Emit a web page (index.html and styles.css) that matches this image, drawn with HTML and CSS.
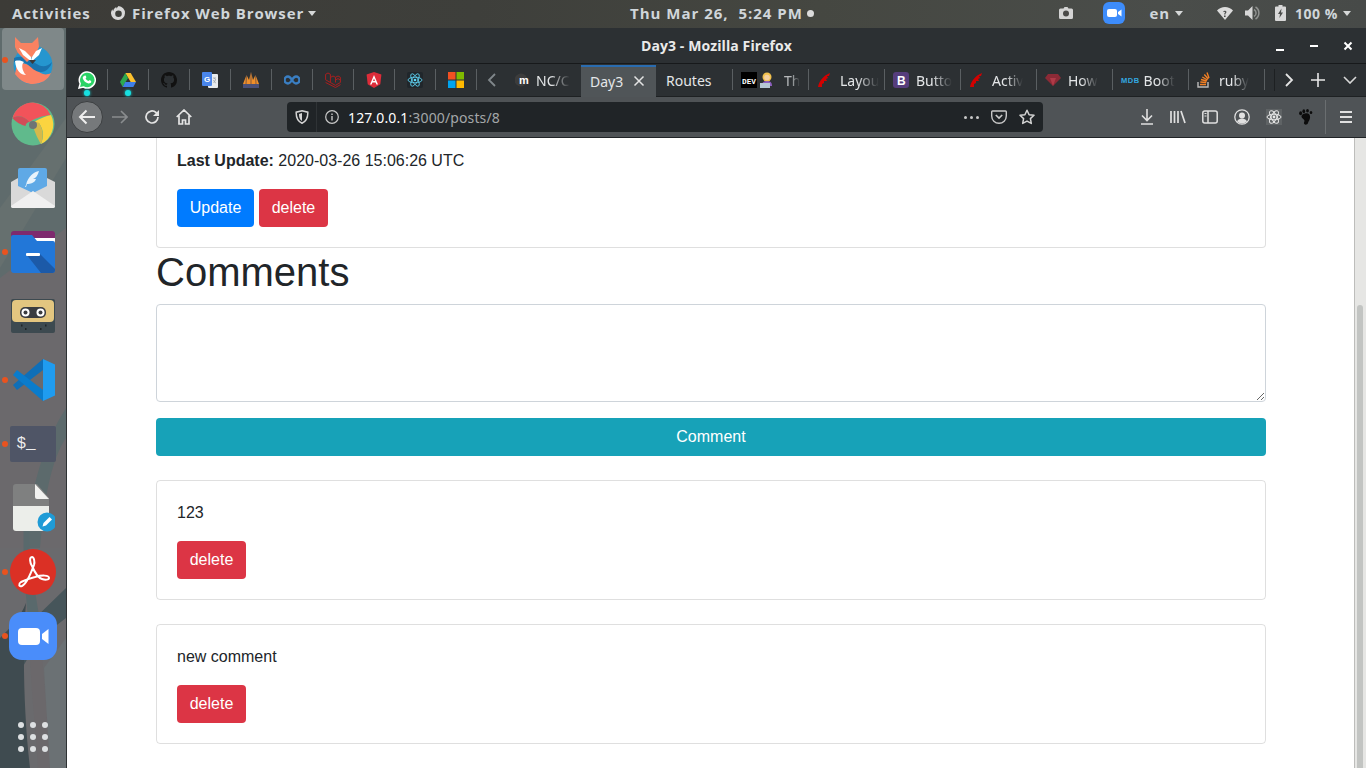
FILE: index.html
```html
<!DOCTYPE html>
<html lang="en">
<head>
<meta charset="utf-8">
<title>Day3 - Mozilla Firefox</title>
<link rel="stylesheet" href="styles.css">
</head>
<body>
<header class="topbar">
  <span class="tb-activities">Activities</span>
  <span class="tb-app"><svg class="tb-fx" width="16" height="16" viewBox="0 0 16 16"><path d="M8.500 1a7 7 0 1 1-7.500 7.500c0-1.700.5-3.200 1.400-4.300.1.900.4 1.500.9 1.900C3.400 4.300 4.600 2.800 6.400 2c-.2.600-.1 1.100.2 1.500C7 2.800 7.800 1.800 8.500 1z" fill="#d8d8d8"/><circle cx="8.500" cy="8.700" r="3.300" fill="#3e3f3b"/></svg><span>Firefox Web Browser</span><i class="caret"></i></span>
  <span class="tb-clock">Thu Mar 26,&nbsp; 5:24 PM<i class="tb-dot"></i></span>
  <span class="tb-tray">
    <svg class="tr-cam" width="14" height="12" viewBox="0 0 14 12"><path d="M1.500 1.500h3L5.500 0h3l1 1.500h3A1.500 1.500 0 0 1 14 3v7.500a1.500 1.500 0 0 1-1.500 1.500h-11A1.500 1.500 0 0 1 0 10.500V3a1.500 1.500 0 0 1 1.500-1.500z" fill="#d4d4d4"/><circle cx="7" cy="6.500" r="3" fill="#4a4a48"/></svg>
    <svg class="tr-zoom" width="22" height="22" viewBox="0 0 22 22"><rect width="22" height="22" rx="6" fill="#3d8cfb"/><rect x="4" y="7" width="10" height="8" rx="2" fill="#fff"/><path d="M15 10l3.500-2.500v7L15 12z" fill="#fff"/></svg>
    <span class="tr-lang">en</span><i class="caret tr-c1"></i>
    <svg class="tr-wifi" width="16" height="13" viewBox="0 0 16 13"><path d="M8 13L0 3.500C2 1.500 5 0 8 0s6 1.500 8 3.500z" fill="#dcdcdc"/><path d="M7 8.500h1.600V10H7zM6.200 4.500c.4-.8 2.800-1 3.200.3.300 1-1 1.200-1 2.800H7.200c0-1.500 1.100-1.800 1-2.500-.1-.5-.9-.4-1.200.2z" fill="#4a4c4a"/></svg>
    <svg class="tr-vol" width="15" height="14" viewBox="0 0 15 14"><path d="M0 4.500h3L7.500 0v14L3 9.500H0z" fill="#d8d8d8"/><path d="M9 3.500a4 4 0 0 1 0 7M10.500 1a7 7 0 0 1 0 12" stroke="#8f918f" stroke-width="1.500" fill="none"/></svg>
    <svg class="tr-bat" width="11" height="16" viewBox="0 0 11 16"><path d="M3.500 0h4v1.500H10a1 1 0 0 1 1 1V15a1 1 0 0 1-1 1H1a1 1 0 0 1-1-1V2.500a1 1 0 0 1 1-1h2.500z" fill="#d8d8d8"/><path d="M6.500 3.500L3 9h2l-.6 4L8 7.500H6z" fill="#4a4c4a"/></svg>
    <span class="tr-pct">100 %</span><i class="caret tr-c2"></i>
  </span>
</header>

<div class="desk">
  <nav class="dock">
    <svg class="dock-wall" width="66" height="740" viewBox="0 0 66 740" preserveAspectRatio="none">
      <rect width="66" height="740" fill="#5f6b6c"/>
      <path d="M0 250L66 200V520L0 560z" fill="#6b696c"/>
      <path d="M0 180L66 90V130L0 240z" fill="#66706f"/>
      <path d="M66 380C40 420 30 470 24 520L40 520C44 470 52 430 66 410z" fill="#5c6a6c"/>
      <path d="M0 520H66V740H0z" fill="#6a6a6d"/>
      <path d="M30 490C26 530 38 570 42 610L30 610C26 570 22 530 24 490z" fill="#59696c"/>
      <path d="M66 560L30 595 22 640 40 610 66 590z" fill="#46555a"/>
      <path d="M0 610C10 600 20 590 26 575 22 620 24 690 30 740H0z" fill="#3f4b50"/>
      <path d="M30 590C28 640 36 700 38 740H50C48 690 42 640 40 590z" fill="#6b686b"/>
      <path d="M44 640L66 610V740H50z" fill="#6b7174"/>
    </svg>
    <div class="dock-item active"><i class="run"></i>
      <svg width="48" height="48" viewBox="0 0 48 48"><circle cx="24" cy="29" r="19.500" fill="#2596cf"/><path d="M6 38c6 8 12 10 18 10 8 0 15-4 18-11-6 3-10 1-16-4-5-4-12-7-18-5z" fill="#fb8264"/><path d="M5 22c8-3 14 0 21 5 6 4 11 5 17-1-1 5-6 10-11 10-6 0-10-5-14-8-4-2-8-3-13-2z" fill="#1a73ae"/><path d="M6 25c4-1 7 0 9 1-3 2-2 9 2 13-5 0-10-4-11-14z" fill="#fff"/><path d="M7 0l6 6h11l6-6 1 10-3 6-9 9-9-9-3-6z" fill="#f98261" transform="translate(-1 1)"/><path d="M10 12l6 3 6 6 1 5-9-7z" fill="#fff"/><path d="M33 12l-6 3-4 6-1 5 8-7z" fill="#fff"/><path d="M20 24h7l-3.500 4z" fill="#3d3a3a"/></svg>
    </div>
    <div class="dock-item">
      <svg width="44" height="44" viewBox="0 0 44 44"><circle cx="22" cy="22" r="21.500" fill="#60ba8c"/><path d="M22 .5A21.500 21.500 0 0 0 1.500 16c5-3 12-2 17 4 4-3 12-6 21-7A21.500 21.500 0 0 0 22 .5z" fill="#f2535a"/><path d="M1.500 16c3 4 9 7 13 8 0-2 2-4 4-4-5-6-12-7-17-4z" fill="#d24c58"/><path d="M28 21c-3 0-3.500 0-5-1 5-3 12-6 17-7a21.500 21.500 0 0 1-10 29c3-7 3-14-2-21z" fill="#fbd440"/><path d="M23 20c3 0 4 0 5 1 4 6 5 13 2 21-2-3-6-11-7-15 0-2 1-5 0-7z" fill="#d6b94a"/><circle cx="22" cy="23" r="4" fill="#6f7474"/></svg>
    </div>
    <div class="dock-item">
      <svg width="44" height="40" viewBox="0 0 44 40"><rect x="7" y="0" width="29" height="24" rx="2" fill="#5fa9e6"/><path d="M28 3c-5 1-11 5-13 14l-1 2 1 0 1-3c3 0 8-1 9-5 0 0-2 0-3 0 3-1 5-4 6-8z" fill="#e8f3fb"/><path d="M0 14l7-4v8l15 7 14-7v-8l8 4v24a2 2 0 0 1-2 2H2a2 2 0 0 1-2-2z" fill="#d9d9d9"/><path d="M0 38l22-15 22 15a2 2 0 0 1-2 2H2a2 2 0 0 1-2-2z" fill="#f0f0f0"/></svg>
    </div>
    <div class="dock-item"><i class="run"></i>
      <svg width="44" height="42" viewBox="0 0 44 42"><path d="M0 3a3 3 0 0 1 3-3h38a3 3 0 0 1 3 3v10H0z" fill="#7e2a6e"/><rect x="22" y="7" width="22" height="6" fill="#fff"/><path d="M0 6a2 2 0 0 1 2-2h19l5 6h16a2 2 0 0 1 2 2v27a3 3 0 0 1-3 3H3a3 3 0 0 1-3-3z" fill="#2277d8"/><path d="M15 23h14l15 15v1a3 3 0 0 1-3 3H30z" fill="#1c5aa8"/><rect x="15" y="22" width="14" height="3" rx="1" fill="#fff"/></svg>
    </div>
    <div class="dock-item">
      <svg width="44" height="34" viewBox="0 0 44 34"><path d="M0 2a2 2 0 0 1 2-2h40a2 2 0 0 1 2 2v30a2 2 0 0 1-2 2H2a2 2 0 0 1-2-2z" fill="#3d4a50"/><rect x="1" y="1" width="42" height="22" rx="4" fill="#e3c680"/><rect x="9" y="8" width="26" height="11" rx="5" fill="#3a3c40"/><circle cx="14.500" cy="13.500" r="4" fill="#fff"/><circle cx="14.500" cy="13.500" r="2" fill="#3a3c40"/><circle cx="29.500" cy="13.500" r="4" fill="#fff"/><circle cx="29.500" cy="13.500" r="2" fill="#3a3c40"/><path d="M10 26.500h1.500M14 30h1.500M29 30h1.500M34 26.500h1.500" stroke="#1f2528" stroke-width="2"/></svg>
    </div>
    <div class="dock-item"><i class="run"></i>
      <svg width="44" height="42" viewBox="0 0 44 42"><path d="M32 0L2 26l4 5L32 11z" fill="#0f6fb8"/><path d="M32 42L2 16l4-5 26 20z" fill="#0a7ccc"/><path d="M32 0l12 5.500v31L32 42z" fill="#1f9cf0"/></svg>
    </div>
    <div class="dock-item"><i class="run"></i>
      <div class="term"><span class="term-text">$_</span></div>
    </div>
    <div class="dock-item">
      <svg width="44" height="48" viewBox="0 0 44 48"><path d="M5 0h21l12 14v8H2V3a3 3 0 0 1 3-3z" fill="#7f8080"/><path d="M2 22h36v22a3 3 0 0 1-3 3H5a3 3 0 0 1-3-3z" fill="#eceeea"/><path d="M24 0l14 15H26a2 2 0 0 1-2-2z" fill="#f2f2f0"/><circle cx="36" cy="38" r="9.500" fill="#1f9bd6"/><path d="M31.500 42.500l1-3.500 6-6 2.500 2.500-6 6z" fill="#fff"/></svg>
    </div>
    <div class="dock-item"><i class="run"></i>
      <svg width="46" height="46" viewBox="0 0 46 46"><circle cx="23" cy="23" r="23" fill="#db3025"/><path d="M11 33c-3 2-2 5 1 4 5-2 9-13 12-21 1-3 0-8-2-8-3 0-2 6 0 9 3 7 7 12 10 13 3 1 7 1 7-1 0-3-7-3-14-1-4 1-10 3-14 5z" fill="none" stroke="#fff" stroke-width="2"/></svg>
    </div>
    <div class="dock-item"><i class="run"></i>
      <svg width="48" height="48" viewBox="0 0 48 48"><rect width="48" height="48" rx="13" fill="#4a8dfa"/><rect x="9" y="16" width="22" height="17" rx="4" fill="#fff"/><path d="M33 22l6.500-5v15L33 27z" fill="#fff"/></svg>
    </div>
    <div class="dock-apps">
      <i></i><i></i><i></i><i></i><i></i><i></i><i></i><i></i><i></i>
    </div>
  </nav>

  <div class="window">
    <div class="titlebar">
      <span class="title">Day3 - Mozilla Firefox</span>
      <span class="wm">
        <svg width="12" height="12" viewBox="0 0 12 12"><rect x="2" y="9" width="8" height="2" fill="#fff"/></svg>
        <svg width="12" height="12" viewBox="0 0 12 12"><rect x="2" y="5" width="8" height="2" fill="#fff"/></svg>
        <svg width="12" height="12" viewBox="0 0 12 12"><path d="M2.500 2.500l7 7m0-7l-7 7" stroke="#fff" stroke-width="2"/></svg>
      </span>
    </div>

    <div class="tabbar">
      <span class="pin"><svg width="18" height="18" viewBox="0 0 18 18"><path d="M1 17l1.200-4.300A8 8 0 1 1 5.400 16z" fill="#2bd366" stroke="#fff" stroke-width="1.500"/><path d="M6 5c1-1 2-.5 2.300 1 .2.800-.8 1.200-.6 1.700.5 1 1.400 1.800 2.500 2.300.6-.2.800-1 1.500-.8 1.200.3 1.800 1 1.500 2-.5 1-2 1.500-3.400 1-2.500-.8-4.200-2.500-5-4.800C4.500 6.400 5 5.700 6 5z" fill="#fff"/></svg><b class="pin-note"></b></span>
      <span class="pin"><svg width="16" height="14" viewBox="0 0 16 14"><path d="M5.300 0h5.400l5.300 9h-5.300z" fill="#fbc02d"/><path d="M5.300 0L0 9l2.700 5 5.300-9z" fill="#2da94f"/><path d="M2.700 14h10.600L16 9H5.300z" fill="#3f7ee8"/></svg><b class="pin-note"></b></span>
      <span class="pin"><svg width="16" height="16" viewBox="0 0 16 16"><path fill="#111" d="M8 0C3.580 0 0 3.580 0 8c0 3.540 2.290 6.530 5.470 7.590.4.070.55-.17.55-.38 0-.19-.01-.82-.01-1.490-2.010.37-2.530-.49-2.690-.94-.09-.23-.48-.94-.82-1.130-.28-.15-.68-.52-.01-.53.63-.01 1.080.58 1.230.82.72 1.210 1.870.87 2.330.66.070-.52.28-.87.51-1.070-1.780-.2-3.640-.89-3.640-3.950 0-.87.310-1.590.820-2.150-.080-.2-.360-1.020.080-2.120 0 0 .670-.21 2.200.820.640-.180 1.320-.270 2-.270s1.360.090 2 .270c1.530-1.040 2.200-.820 2.200-.820.440 1.100.160 1.920.080 2.120.510.560.820 1.270.820 2.150 0 3.070-1.870 3.750-3.650 3.950.290.250.540.730.540 1.480 0 1.070-.010 1.930-.010 2.200 0 .210.150.460.550.380A8.010 8.010 0 0 0 16 8c0-4.420-3.580-8-8-8z"/></svg></span>
      <span class="pin"><svg width="16" height="16" viewBox="0 0 16 16"><rect x="6" y="2" width="10" height="14" rx="1" fill="#e8eaed"/><path d="M11 6h3M12.500 6v1M11.500 11c1-1 2-2.500 2-4M11.500 8c.5 1.500 1.500 2.500 2.500 3" stroke="#9aa0a6" fill="none" stroke-width=".8"/><rect width="10" height="14" rx="1" fill="#4a86ec"/><text class="mini" x="2" y="10">G</text></svg></span>
      <span class="pin"><svg width="16" height="16" viewBox="0 0 16 16"><path d="M0 12L3.500 3 6 8l2-8 2 8 2.500-5 3.500 9z" fill="#ef8e2a"/><path d="M3.500 3L3 12M8 0v12M12.500 3L13 12" stroke="#3a3a4a" stroke-width=".6"/><rect y="12" width="16" height="4" fill="#4a5078"/></svg></span>
      <span class="pin"><svg width="16" height="10" viewBox="0 0 16 10"><path d="M8 5C6.500 2.500 5.500 1.500 4 1.500a3.500 3.500 0 0 0 0 7C5.500 8.500 6.500 7.500 8 5c1.500-2.500 2.500-3.500 4-3.500a3.500 3.500 0 0 1 0 7C10.500 8.500 9.500 7.500 8 5z" fill="none" stroke="#3a7ec2" stroke-width="2.400"/></svg></span>
      <span class="pin"><svg width="16" height="16" viewBox="0 0 16 16"><path d="M.6 2.300L3 1l2.400 1.300v8.200l5 2.900 5-2.900V8L13 6.600 10.500 8v2.500M10.500 8V5.300L13 4l2.400 1.300V8M5.400 5.500L8 4l2.500 1.300M5.400 10.500L.6 7.800V2.300m0 8.200l9.900 5 5-2.900" fill="none" stroke="#a81f1f" stroke-width="1"/></svg></span>
      <span class="pin"><svg width="16" height="16" viewBox="0 0 16 16"><path d="M8 0l7.400 2.600-1.100 9.700L8 16l-6.300-3.700L.6 2.600z" fill="#dd2c39"/><path d="M8 3L4 12.500h1.600l.8-2h3.200l.8 2H12zM7 9l1-2.500L9 9z" fill="#fff"/></svg></span>
      <span class="pin"><svg width="16" height="16" viewBox="0 0 16 16"><rect width="16" height="16" rx="2" fill="#20262b"/><g fill="none" stroke="#61dafb" stroke-width=".8"><ellipse cx="8" cy="8" rx="7" ry="2.800"/><ellipse cx="8" cy="8" rx="7" ry="2.800" transform="rotate(60 8 8)"/><ellipse cx="8" cy="8" rx="7" ry="2.800" transform="rotate(120 8 8)"/></g><circle cx="8" cy="8" r="1.300" fill="#61dafb"/></svg></span>
      <span class="pin pin-last"><svg width="16" height="16" viewBox="0 0 16 16"><rect width="7.500" height="7.500" fill="#f25022"/><rect x="8.500" width="7.500" height="7.500" fill="#7fba00"/><rect y="8.500" width="7.500" height="7.500" fill="#00a4ef"/><rect x="8.500" y="8.500" width="7.500" height="7.500" fill="#ffb900"/></svg></span>
      <span class="tab-scroll tab-left"><svg width="10" height="14" viewBox="0 0 10 14"><path d="M8 1L2 7l6 6" fill="none" stroke="#80878b" stroke-width="1.800"/></svg></span>
      <span class="tab tab-nc"><svg width="16" height="14" viewBox="0 0 16 14"><circle cx="6" cy="7" r="6.500" fill="#3c3c3c"/><text class="mini mini-m" x="4" y="11">m</text></svg><span class="tab-label">NC/C</span></span>
      <span class="tab tab-active"><span>Day3</span><svg width="12" height="12" viewBox="0 0 12 12"><path d="M1.500 1.500l9 9m0-9l-9 9" stroke="#e4e4e4" stroke-width="1.500"/></svg></span>
      <span class="tab tab-routes sep"><span>Routes</span></span>
      <span class="tab tab-dev sep"><svg width="16" height="16" viewBox="0 0 16 16"><rect width="16" height="16" fill="#000"/><text class="mini mini-dev" x="1" y="11.500" textLength="14" lengthAdjust="spacingAndGlyphs">DEV</text></svg><svg class="emoji" width="14" height="16" viewBox="0 0 14 16"><circle cx="7" cy="5" r="4.500" fill="#f2c14e"/><circle cx="7" cy="5.500" r="2.800" fill="#f5d0a0"/><path d="M2 14c0-4 2-5 5-5s5 1 5 5z" fill="#8c5fbf"/><rect y="11" width="10" height="5" fill="#b6c8d4"/></svg><span class="tab-label tl-short">Th</span></span>
      <span class="tab sep"><svg class="rails" width="14" height="14" viewBox="0 0 14 14"><path d="M1 14C2 8 6 3 13 0l-1 3-2 0 1 2-2 1 1 2-3 0 0 2-2 1 0 3z" fill="#d30000"/></svg><span class="tab-label">Layou</span></span>
      <span class="tab tab-b sep"><svg width="16" height="16" viewBox="0 0 16 16"><rect width="16" height="16" rx="3" fill="#563d7c"/><text class="mini mini-b" x="4" y="12.500">B</text></svg><span class="tab-label">Butto</span></span>
      <span class="tab sep"><svg class="rails" width="14" height="14" viewBox="0 0 14 14"><path d="M1 14C2 8 6 3 13 0l-1 3-2 0 1 2-2 1 1 2-3 0 0 2-2 1 0 3z" fill="#d30000"/></svg><span class="tab-label">Activ</span></span>
      <span class="tab tab-how sep"><svg width="16" height="12" viewBox="0 0 16 12"><path d="M3 0h10l3 4-8 8-8-8z" fill="#8c2a36"/><path d="M5 4h6l-3 8z" fill="#b03a48"/></svg><span class="tab-label">How</span></span>
      <span class="tab sep"><span class="mdb">MDB</span><span class="tab-label tl-boot">Boot</span></span>
      <span class="tab tab-ruby sep"><svg width="14" height="16" viewBox="0 0 14 16"><path d="M1 10v5h10v-5" fill="none" stroke="#bcbbbb" stroke-width="1.400"/><path d="M3 12.500h6M3.300 10l6 .5M4 7.500l5.800 1.500M5.300 5l5.200 3M7.300 2.500l4 4.500M10 .5l2 5.500" stroke="#f48024" stroke-width="1.400"/></svg><span class="tab-label">ruby</span></span>
      <span class="tab-scroll tab-right"><svg width="10" height="14" viewBox="0 0 10 14"><path d="M2 1l6 6-6 6" fill="none" stroke="#e4e4e4" stroke-width="1.800"/></svg></span>
      <span class="tab-btn"><svg width="14" height="14" viewBox="0 0 14 14"><path d="M7 0v14M0 7h14" stroke="#e8e8e8" stroke-width="1.600"/></svg></span>
      <span class="tab-btn"><svg width="14" height="8" viewBox="0 0 14 8"><path d="M1 1l6 6 6-6" fill="none" stroke="#d8d8d8" stroke-width="1.600"/></svg></span>
    </div>

    <div class="navbar">
      <span class="nb-back"><svg width="18" height="16" viewBox="0 0 18 16"><path d="M17 8H2M8.500 1.500L2 8l6.500 6.500" fill="none" stroke="#eee" stroke-width="2"/></svg></span>
      <span class="nb-ico nb-fwd"><svg width="16" height="14" viewBox="0 0 16 14"><path d="M0 7h15M9 1l6 6-6 6" fill="none" stroke="#8a8d8f" stroke-width="1.600"/></svg></span>
      <span class="nb-ico"><svg width="16" height="16" viewBox="0 0 16 16"><path d="M14 8a6 6 0 1 1-2-4.500L14 5.500" fill="none" stroke="#e4e4e4" stroke-width="1.700"/><path d="M15 1v6H9z" fill="#e4e4e4"/></svg></span>
      <span class="nb-ico"><svg width="16" height="16" viewBox="0 0 16 16"><path d="M.7 8L8 1l7.300 7M3 6.500V15h3.500v-4h3v4H13V6.500" fill="none" stroke="#e4e4e4" stroke-width="1.700"/></svg></span>
      <div class="urlbar">
        <svg class="u-shield" width="14" height="14" viewBox="0 0 14 14"><path d="M7 .8l5.800 1.400C13 7 12 11 7 13.300 2 11 1 7 1.200 2.200z" fill="none" stroke="#d4d4d4" stroke-width="1.500"/><path d="M7 3v8C4.500 9.500 4 7 4 4z" fill="#d4d4d4"/></svg>
        <i class="u-sep"></i>
        <svg class="u-info" width="14" height="14" viewBox="0 0 14 14"><circle cx="7" cy="7" r="6.300" fill="none" stroke="#c8c8c8" stroke-width="1.200"/><rect x="6.300" y="6" width="1.400" height="4.500" fill="#c8c8c8"/><rect x="6.300" y="3.500" width="1.400" height="1.500" fill="#c8c8c8"/></svg>
        <span class="u-text"><span class="u-host">127.0.0.1</span>:3000/posts/8</span>
        <span class="u-dots"><i></i><i></i><i></i></span>
        <svg class="u-pocket" width="16" height="14" viewBox="0 0 16 14"><path d="M1.500 1h13a.8.8 0 0 1 .8.8V6a7.300 7.300 0 0 1-14.600 0V1.800a.8.8 0 0 1 .8-.8z" fill="none" stroke="#c8c8c8" stroke-width="1.400"/><path d="M4.800 5L8 8l3.200-3" fill="none" stroke="#c8c8c8" stroke-width="1.700"/></svg>
        <svg class="u-star" width="16" height="16" viewBox="0 0 16 16"><path d="M8 1.300l2.100 4.400 4.900.6-3.600 3.300.9 4.800L8 12.100l-4.300 2.300.9-4.800L1 6.300l4.900-.6z" fill="none" stroke="#d4d4d4" stroke-width="1.500" stroke-linejoin="round"/></svg>
      </div>
      <span class="nb-tools">
        <svg width="14" height="16" viewBox="0 0 14 16"><path d="M7 0v11M2 6.500L7 11.500l5-5M1 15h12" fill="none" stroke="#e0e0e0" stroke-width="1.600"/></svg>
        <svg width="16" height="14" viewBox="0 0 16 14"><path d="M1 1v12M4.500 1v12M8 1v12M11 1l4 12" stroke="#e0e0e0" stroke-width="1.700" fill="none"/></svg>
        <svg width="16" height="14" viewBox="0 0 16 14"><rect x=".8" y="1" width="14.400" height="12" rx="2" fill="none" stroke="#e0e0e0" stroke-width="1.500"/><path d="M6 1v12" stroke="#e0e0e0" stroke-width="1.500"/><path d="M2.500 3.500h2M2.500 6h2" stroke="#e0e0e0"/></svg>
        <svg width="16" height="16" viewBox="0 0 16 16"><circle cx="8" cy="8" r="7.200" fill="none" stroke="#e0e0e0" stroke-width="1.300"/><circle cx="8" cy="6.500" r="3" fill="#e0e0e0"/><path d="M3 12.500c1-2.200 3-3 5-3s4 .8 5 3c-3 2.500-7 2.500-10 0z" fill="#e0e0e0"/></svg>
        <svg class="t-react" width="16" height="16" viewBox="0 0 16 16"><g fill="none" stroke="#e8e8e8" stroke-width="1"><ellipse cx="8" cy="8" rx="7" ry="2.800"/><ellipse cx="8" cy="8" rx="7" ry="2.800" transform="rotate(60 8 8)"/><ellipse cx="8" cy="8" rx="7" ry="2.800" transform="rotate(120 8 8)"/></g><circle cx="8" cy="8" r="1.400" fill="#e8e8e8"/></svg>
        <svg width="16" height="16" viewBox="0 0 16 16"><path d="M7 4.500c3.500-1 5.500 1 5 4.500-.4 2.500-1.500 3-2 5-.4 1.800-3.500 2.300-4 .6-.4-1.300 1-2 .2-3.500C5 9.400 3 8.800 3.600 6.800 4 5.300 5.300 5 7 4.500z" fill="#0c0c0c"/><ellipse cx="2.600" cy="4.200" rx="1.500" ry="2" fill="#0c0c0c"/><ellipse cx="5.800" cy="2.200" rx="1.400" ry="2" fill="#0c0c0c"/><ellipse cx="9.500" cy="1.800" rx="1.400" ry="1.800" fill="#0c0c0c"/><ellipse cx="13" cy="3.500" rx="1.300" ry="1.500" fill="#0c0c0c"/></svg>
      </span>
      <i class="nb-sep"></i>
      <span class="nb-menu"><i></i><i></i><i></i></span>
    </div>

    <div class="viewport">
      <main class="page">
        <div class="container">
          <section class="card card-clipped">
            <p><strong>Last Update:</strong> 2020-03-26 15:06:26 UTC</p>
            <div class="actions"><a class="btn btn-primary">Update</a><a class="btn btn-danger">delete</a></div>
          </section>
          <h1>Comments</h1>
          <textarea class="input" aria-label="Comment"></textarea>
          <button class="btn btn-info btn-block">Comment</button>
          <section class="card">
            <p>123</p>
            <div class="actions"><a class="btn btn-danger">delete</a></div>
          </section>
          <section class="card">
            <p>new comment</p>
            <div class="actions"><a class="btn btn-danger">delete</a></div>
          </section>
        </div>
      </main>
      <div class="scrollbar"><div class="thumb"></div></div>
    </div>
  </div>
</div>
</body>
</html>
```

FILE: styles.css
```css
* { box-sizing: border-box; }
html, body { margin: 0; height: 100%; }
body {
  width: 1366px; height: 768px; overflow: hidden;
  display: flex; flex-direction: column;
  font-family: "Liberation Sans", Arial, sans-serif;
  background: #555;
}
i, b { display: block; font-style: normal; }

/* GNOME top bar */
.topbar {
  height: 28px; flex: none; display: flex; align-items: center;
  position: relative; padding-bottom: 2px;
  background: linear-gradient(90deg, #3c3b37 0%, #3e3f3b 35%, #454741 60%, #4a4d4a 85%, #474a48 100%);
  color: #d0d6da;
  font: 700 15px "Open Sans", sans-serif;
  letter-spacing: .9px;
  white-space: nowrap;
}
.tb-activities { margin-left: 12px; }
.tb-app { position: absolute; left: 110px; display: flex; align-items: center; }
.tb-fx { margin-right: 6px; }
.caret { width: 0; height: 0; border: 4.500px solid transparent; border-top: 5px solid #d6d8d8; border-bottom: 0; }
.tb-app .caret { margin-left: 4px; }
.tb-clock { position: absolute; left: 630px; display: flex; align-items: center; letter-spacing: 1px; }
.tb-dot { width: 7px; height: 7px; border-radius: 50%; background: #dcdcdc; margin-left: 4px; }
.tb-tray { margin-left: auto; display: flex; align-items: center; padding-right: 15px; }
.tr-zoom { margin-left: 30px; }
.tr-lang { margin-left: 24px; }
.tr-c1 { margin-left: 5px; }
.tr-wifi { margin-left: 34px; }
.tr-vol { margin-left: 12px; }
.tr-bat { margin-left: 15px; }
.tr-pct { margin-left: 9px; font-size: 14px; letter-spacing: .55px; }
.tr-c2 { margin-left: 5px; }

.desk { flex: 1; display: flex; min-height: 0; }

/* Dock */
.dock {
  width: 67px; flex: none; display: flex; flex-direction: column; position: relative;
  border-right: 1px solid #2e3234;
  background: #5f6b6c;
}
.dock-wall { position: absolute; left: 0; top: 0; }
.dock-item { height: 64px; flex: none; display: flex; align-items: center; justify-content: center; position: relative; padding-right: 1px; }
.dock-item.active::before {
  content: ""; position: absolute; left: 2px; top: 0; width: 62px; height: 62px;
  border-radius: 4px; background: rgba(255,255,255,.2);
}
.dock-item svg { position: relative; }
.run { position: absolute; left: 2px; top: 29px; width: 6px; height: 6px; border-radius: 50%; background: #e9531f; z-index: 1; }
.term { position: relative; width: 46px; height: 36px; border-radius: 2px; background: #4f5566; display: flex; align-items: center; padding-left: 7px; }
.term-text { font: 16px "Liberation Mono", monospace; color: #eee; }
.dock-apps {
  position: relative;
  margin-top: auto; margin-bottom: 16px; margin-left: 18px;
  display: grid; grid-template-columns: repeat(3, 6px); gap: 6px;
}
.dock-apps i { width: 6px; height: 6px; border-radius: 50%; background: #dde0e2; }

/* Firefox window */
.window { flex: 1; min-width: 0; display: flex; flex-direction: column; }
.titlebar {
  height: 36px; flex: none; position: relative; display: flex; align-items: center; justify-content: center;
  background: #2c3033; border-bottom: 1px solid #17191b;
}
.title { font: 700 14px "Open Sans", sans-serif; letter-spacing: .1px; color: #eaeaea; }
.wm { position: absolute; right: 12px; top: 12px; display: flex; gap: 22px; }

.tabbar {
  height: 33px; flex: none; display: flex; align-items: center;
  background: #2c3033; border-bottom: 1px solid #1e2123;
  color: #e4e6e8; font: 14px "Noto Sans", sans-serif;
}
.pin { width: 41px; height: 100%; flex: none; display: flex; align-items: center; justify-content: center; position: relative; padding-right: 1px; }
.pin::after { content: ""; position: absolute; right: 0; top: 5px; bottom: 6px; width: 1px; background: #5a5f62; }
.pin-note { position: absolute; left: 17px; bottom: 0; width: 6px; height: 6px; border-radius: 50%; background: #17dfe0; box-shadow: 0 0 3px #17dfe0; }
.pin svg { flex: none; }
.mini { font: 700 8px "Liberation Sans", sans-serif; fill: #fff; }
.mini-m { font-size: 11px; }
.mini-dev { font: 700 7.500px "Liberation Mono", monospace; }
.mini-b { font-size: 12px; }
.tab-scroll { flex: none; width: 30px; display: flex; justify-content: center; }
.tab-left { margin-right: 9px; }
.tab {
  width: 76px; height: 32px; flex: none; display: flex; align-items: center; gap: 6px;
  padding-left: 8px; position: relative; white-space: nowrap; overflow: hidden;
}
.tab.sep::after { content: ""; position: absolute; right: 0; top: 5px; bottom: 6px; width: 1px; background: #5a5f62; }
.tab-nc { width: 66px; margin-left: -1px; padding-left: 0; gap: 5px; }
.tab-active {
  width: 75px; height: 32px; margin-bottom: -1px; padding: 0 11px 2px 9px; justify-content: space-between;
  background: #505558; border-top: 2px solid #2a6cb0; align-self: flex-end;
}
.tab-routes { width: 77px; padding-left: 10px; }
.tab-label {
  display: block;
  -webkit-mask-image: linear-gradient(90deg, #000 45%, transparent 100%);
  mask-image: linear-gradient(90deg, #000 45%, transparent 100%);
}
.tab-dev { gap: 3px; }
.emoji { margin-right: 7px; }
.tl-short { opacity: .75; }
.tab-b .tab-label, .tab-how .tab-label { margin-left: 1px; }
.tab-ruby .tab-label { margin-left: 2px; }
.tl-boot { margin-left: -2px; }
.rails { margin-right: 3px; }
.mdb { font: 700 7.500px "Liberation Sans", sans-serif; color: #33a8e0; letter-spacing: .5px; }
.tab-right { width: 28px; margin-left: 9px; border-left: 1px solid #1d2022; height: 22px; align-items: center; }
.tab-btn { width: 32px; flex: none; display: flex; justify-content: center; }

.navbar {
  height: 41px; flex: none; display: flex; align-items: center;
  background: #4f5356; border-bottom: 1px solid #202326;
  padding-left: 4px;
}
.nb-back { width: 32px; height: 32px; border-radius: 50%; background: #76797b; border: 1px solid #3c3f41; display: flex; align-items: center; justify-content: center; flex: none; }
.nb-ico { width: 32px; flex: none; display: flex; justify-content: center; }
.nb-fwd { margin-left: 1px; }
.urlbar {
  margin-left: 87px; width: 756px; height: 30px; flex: none; display: flex; align-items: center;
  background: #202427; border-radius: 4px; padding-left: 8px;
}
.u-sep { width: 1px; height: 30px; background: #2f3336; margin-left: 7px; }
.u-info { margin-left: 8px; }
.u-text { margin-left: 9px; font: 14px "Noto Sans", sans-serif; letter-spacing: .13px; color: #a4a7a9; flex: 1; }
.u-host { color: #fff; }
.u-dots { display: flex; gap: 3px; margin-right: 12px; }
.u-dots i { width: 3px; height: 3px; border-radius: 50%; background: #c8c8c8; }
.u-pocket { margin-right: 12px; }
.u-star { margin-right: 8px; }
.nb-tools { margin-left: 97px; display: flex; align-items: center; gap: 16px; }
.t-react { background: #5f6365; }
.nb-sep { width: 1px; height: 34px; background: #6a6e70; margin-left: 11px; }
.nb-menu { margin-left: 14px; width: 12px; display: flex; flex-direction: column; gap: 3px; }
.nb-menu i { height: 2px; background: #e0e0e0; }

/* Page */
.viewport { flex: 1; min-height: 0; display: flex; background: #fff; }
.page { flex: 1; min-width: 0; overflow: hidden; padding-left: 89px; color: #212529; font-size: 16px; line-height: 1.5; }
.container { width: 1110px; }
.card { border: 1px solid rgba(0,0,0,.125); border-radius: 4px; padding: 20px; margin-bottom: 24px; }
.card-clipped { border-top: 0; border-top-left-radius: 0; border-top-right-radius: 0; padding-top: 11px; margin-bottom: 0; }
.card p { margin: 0 0 16px; }
.actions { display: flex; gap: 5px; }
h1 { margin: 0 0 8px; font-size: 40px; font-weight: 500; line-height: 1.2; }
.input {
  display: block; width: 100%; height: 98px; margin-bottom: 16px; padding: 6px 12px;
  border: 1px solid #ced4da; border-radius: 4px; background: #fff; resize: vertical;
  font: inherit; color: #495057;
}
.btn {
  display: inline-block; height: 38px; padding: 6px 11.7px; border: 1px solid transparent; border-radius: 4px;
  font: 16px/24px "Liberation Sans", Arial, sans-serif; color: #fff; text-align: center;
}
.btn-primary { background: #007bff; }
.btn-danger { background: #dc3545; }
.btn-info { background: #17a2b8; }
.btn-block { display: block; width: 100%; margin-bottom: 24px; }
.scrollbar { width: 12px; flex: none; background: #e6e6e4; border-left: 1px solid #bdbdbb; padding: 167px 3px 0 2px; }
.thumb { height: 100%; background: #c2c4c2; border-radius: 3px 3px 0 0; }
```
